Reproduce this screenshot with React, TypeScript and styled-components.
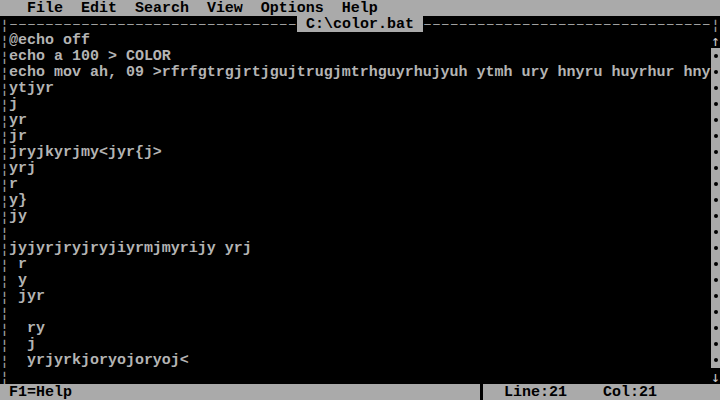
import React from "react";
import styled, { createGlobalStyle } from "styled-components";

const GRAY = "#aaaaaa";
const TEXT = "#b4b4b4";

const Global = createGlobalStyle`
  html, body { margin: 0; padding: 0; background: #000; }
  body { width: 720px; height: 400px; overflow: hidden; }
`;

const Screen = styled.div`
  width: 720px;
  height: 400px;
  background: #000;
  color: ${TEXT};
  font-family: "Liberation Mono", "DejaVu Sans Mono", monospace;
  font-size: 14.99px;
  line-height: 14px;
  font-weight: bold;
  display: grid;
  grid-template-rows: 16px 16px 1fr 16px;
`;

const Row = styled.div`
  display: flex;
  height: 16px;
  box-sizing: border-box;
  padding-top: 2px;
  white-space: pre;
`;

const MenuBar = styled(Row)`
  gap: 18px;
  padding-left: 27px;
  background: ${GRAY};
  color: #000;
`;

const MenuItem = styled.span``;

const TitleRow = styled(Row)`
  padding-top: 0;
  align-items: stretch;
`;

const Gutter = styled.span`
  width: 9px;
  flex: none;
  padding-top: 2px;
  font-family: "DejaVu Sans Mono", monospace;
  font-size: 14.8px;
  font-weight: normal;
  color: #a0a0a0;
`;

const Rule = styled.span`
  width: 288px;
  flex: none;
  padding-top: 2px;
  font-weight: normal;
  color: #a0a0a0;
`;

const Title = styled.span`
  padding-top: 2px;
  background: ${GRAY};
  color: #000;
`;

const Editor = styled.div`
  display: flex;
  flex-direction: column;
`;

const EditorRow = styled(Row)`
  padding-top: 0;
  align-items: stretch;
`;

const LineText = styled.span`
  flex: 1;
  padding-top: 2px;
`;

const ScrollCell = styled.span<{ $kind: "up" | "track" | "down" }>`
  width: 9px;
  flex: none;
  position: relative;
  padding-top: 2px;
  text-align: center;
  color: #c8c8c8;
  font-family: "DejaVu Sans Mono", monospace;
  font-size: 14.8px;
  font-weight: normal;
  background: ${(p) => (p.$kind === "track" ? GRAY : "#000")};
  ${(p) =>
    p.$kind === "track"
      ? `&::after {
          content: "";
          position: absolute;
          left: 3px;
          top: 6px;
          width: 4px;
          height: 4px;
          border-radius: 50%;
          background: #000;
        }`
      : ""}
`;

const StatusBar = styled(Row)`
  padding-top: 0;
  align-items: stretch;
  background: ${GRAY};
  color: #000;
`;

const StatusLeft = styled.span`
  width: 471px;
  padding-left: 9px;
  padding-top: 2px;
  flex: none;
`;

const Divider = styled.span`
  width: 3px;
  flex: none;
  background: #000;
`;

const StatusRight = styled.span`
  display: flex;
  gap: 36px;
  padding-left: 21px;
  padding-top: 2px;
`;

const lines: string[] = [
  "@echo off",
  "echo a 100 > COLOR",
  "echo mov ah, 09 >rfrfgtrgjrtjgujtrugjmtrhguyrhujyuh ytmh ury hnyru huyrhur hny",
  "ytjyr",
  "j",
  "yr",
  "jr",
  "jryjkyrjmy<jyr{j>",
  "yrj",
  "r",
  "y}",
  "jy",
  "",
  "jyjyrjryjryjiyrmjmyrijy yrj",
  " r",
  " y",
  " jyr",
  "",
  "  ry",
  "  j",
  "  yrjyrkjoryojoryoj<",
  "",
];

const menus = ["File", "Edit", "Search", "View", "Options", "Help"];

export default function App() {
  const dashes = "–".repeat(32);
  return (
    <>
      <Global />
      <Screen>
        <MenuBar>
          {menus.map((m) => (
            <MenuItem key={m}>{m}</MenuItem>
          ))}
        </MenuBar>
        <TitleRow>
          <Gutter>¦</Gutter>
          <Rule>{dashes}</Rule>
          <Title>{" C:\\color.bat "}</Title>
          <Rule>{dashes}</Rule>
          <Gutter>¦</Gutter>
        </TitleRow>
        <Editor>
          {lines.map((l, i) => {
            const kind = i === 0 ? "up" : i === lines.length - 1 ? "down" : "track";
            return (
              <EditorRow key={i}>
                <Gutter>¦</Gutter>
                <LineText>{l}</LineText>
                <ScrollCell $kind={kind}>
                  {kind === "up" ? "↑" : kind === "down" ? "↓" : ""}
                </ScrollCell>
              </EditorRow>
            );
          })}
        </Editor>
        <StatusBar>
          <StatusLeft>F1=Help</StatusLeft>
          <Divider />
          <StatusRight>
            <span>Line:21</span>
            <span>Col:21</span>
          </StatusRight>
        </StatusBar>
      </Screen>
    </>
  );
}
